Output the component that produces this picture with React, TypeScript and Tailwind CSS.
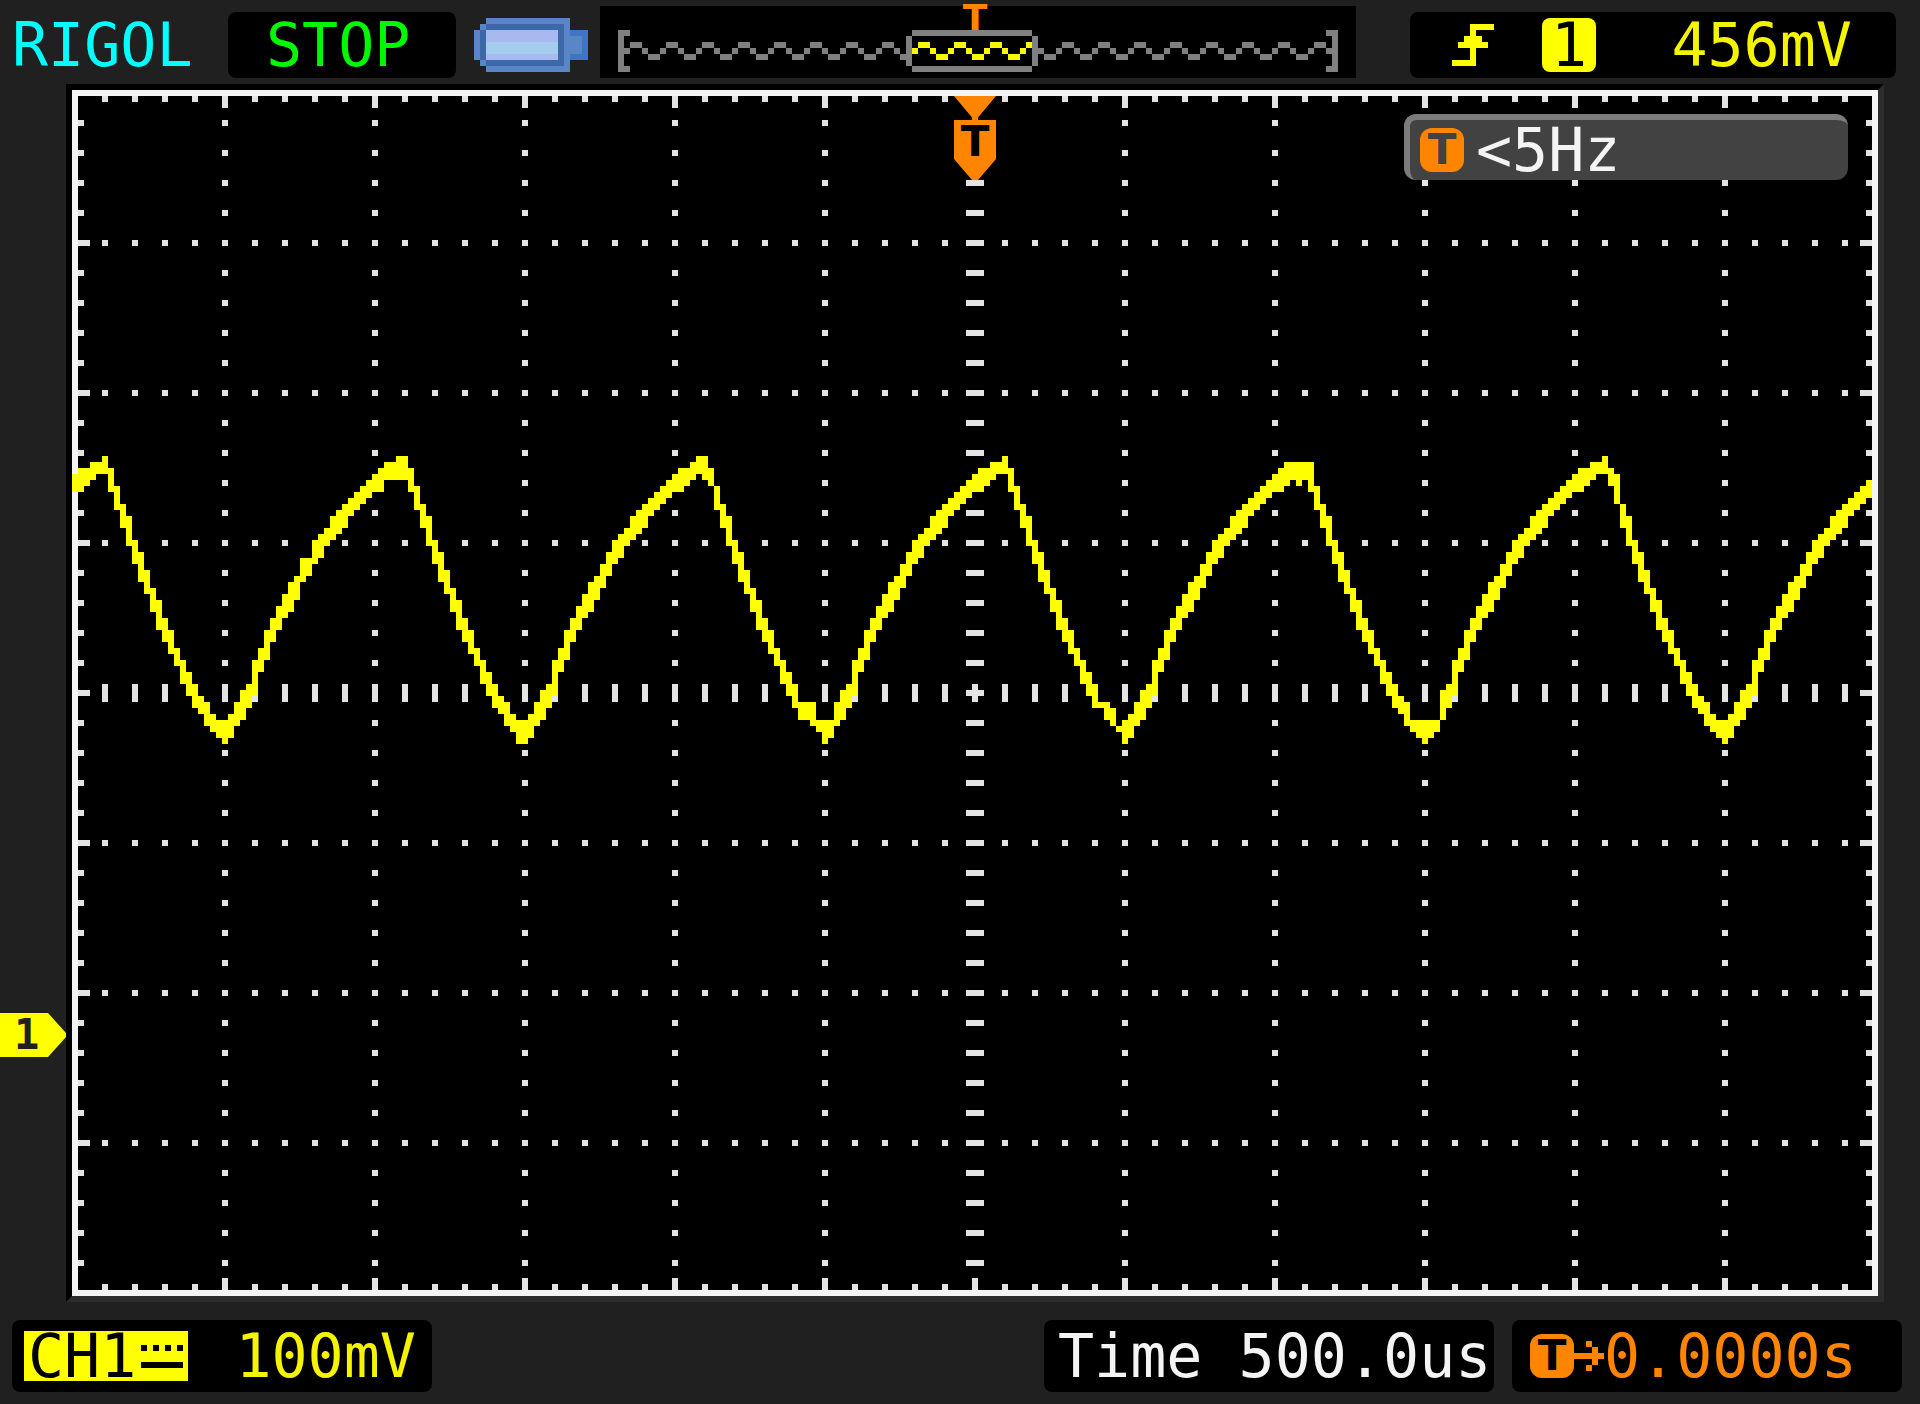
import React from "react";

const COLUMNS = 300;

// one period of the trace, starting at the peak: [column, top row, bottom row]
const PERIOD = 50;
const CYCLE: [number, number, number][] = [
  [0, 61, 64],
  [1, 63, 67],
  [2, 66, 70],
  [3, 69, 73],
  [4, 71, 76],
  [5, 75, 79],
  [6, 77, 82],
  [7, 80, 84],
  [8, 83, 87],
  [10, 88, 92],
  [12, 93, 96],
  [14, 97, 101],
  [16, 101, 104],
  [18, 104, 107],
  [19, 105, 108],
  [20, 105, 109],
  [21, 104, 108],
  [22, 102, 106],
  [24, 99, 103],
  [25, 95, 101],
  [26, 93, 97],
  [28, 88, 92],
  [30, 84, 88],
  [32, 81, 85],
  [34, 77, 81],
  [35, 75, 79],
  [37, 73, 76],
  [39, 70, 74],
  [41, 68, 71],
  [43, 66, 69],
  [45, 64, 67],
  [47, 63, 66],
  [49, 62, 64],
  [50, 61, 64],
];

// columns where the noise makes the trace wider than usual
const NOISE: Record<number, [number, number]> = {
  0: [64, 67],
  1: [63, 67],
  38: [78, 82],
  39: [78, 81],
  44: [70, 74],
  52: [62, 65],
  53: [62, 65],
  54: [61, 65],
  55: [61, 65],
  56: [63, 67],
  74: [105, 109],
  104: [61, 64],
  105: [61, 65],
  106: [63, 66],
  121: [102, 105],
  122: [102, 105],
  123: [102, 106],
  124: [105, 107],
  126: [105, 108],
  171: [102, 103],
  172: [102, 105],
  173: [103, 106],
  174: [106, 107],
  202: [62, 66],
  203: [62, 65],
  204: [62, 66],
  205: [62, 65],
  206: [62, 67],
  223: [105, 107],
  224: [105, 108],
  226: [105, 108],
  227: [105, 107],
  256: [63, 66],
  257: [64, 69],
};

function traceSpan(column: number): [number, number] {
  if (NOISE[column]) return NOISE[column];

  const phase = (column - 5 + PERIOD) % PERIOD;
  const next = CYCLE.findIndex((point) => point[0] > phase);
  const [x0, top0, bottom0] = CYCLE[next - 1];
  const [x1, top1, bottom1] = CYCLE[next];
  const t = (phase - x0) / (x1 - x0);

  return [
    Math.floor(top0 + (top1 - top0) * t),
    Math.ceil(bottom0 + (bottom1 - bottom0) * t),
  ];
}

const range = (from: number, to: number, step = 1) => {
  const values: number[] = [];
  for (let i = from; i <= to; i += step) values.push(i);
  return values;
};

const box = (x: number, y: number, w: number, h: number) =>
  `M${x} ${y}h${w}v${h}h${-w}z`;

function graticulePath() {
  const parts: string[] = [];

  // edge ticks
  range(5, 295, 5).forEach((x) => {
    const length = x % 25 === 0 ? 2 : 1;
    parts.push(box(x, 1, 1, length), box(x, 200 - length, 1, length));
  });
  range(5, 195, 5).forEach((y) => {
    const length = y % 25 === 0 ? 2 : 1;
    parts.push(box(1, y, length, 1), box(300 - length, y, length, 1));
  });

  // dotted divisions and the two centre axes
  range(25, 275, 25).forEach((x) => {
    range(5, 195, 5).forEach((y) => {
      parts.push(x === 150 ? box(x - 1, y, 3, 1) : box(x, y, 1, 1));
    });
  });
  range(25, 175, 25).forEach((y) => {
    range(5, 295, 5).forEach((x) => {
      if (x === 150 && y !== 100) return;
      parts.push(y === 100 ? box(x, y - 1, 1, 3) : box(x, y, 1, 1));
    });
  });

  return parts.join("");
}

const tracePath = range(0, COLUMNS - 1)
  .map((x) => {
    const [top, bottom] = traceSpan(x);
    return box(x, top, 1, bottom - top);
  })
  .join("");

function memoryWave(from: number, to: number) {
  const rows = [6, 7, 8, 8, 7, 6];
  return range(from, to)
    .map((x) => box(x, rows[x % 6], 1, 1))
    .join("");
}

function Battery() {
  return (
    <svg
      viewBox="0 0 19 9"
      className="mb-1.5 ml-[18px] block w-[114px] shrink-0"
      shapeRendering="crispEdges"
    >
      <path d="M2 0h14v9h-14v-1h-1v-1h-1v-5h1v-1h1z" fill="#5a86c8" />
      <path d="M2 1h13v7h-13v-1h-1v-5h1z" fill="#3c68a8" />
      <path d="M2 2h12v5h-12z" fill="#a8b8f0" />
      <path d="M2 4h12v2h-12z" fill="#a4ccec" />
      <path d="M16 2h3v5h-3z" fill="#4074c4" />
      <path d="M16 3h2v3h-2z" fill="#5a86c8" />
    </svg>
  );
}

function MemoryBar() {
  return (
    <div className="ml-3 min-w-0 flex-1 bg-black">
      <svg
        viewBox="0 0 126 12"
        className="block w-full overflow-visible"
        shapeRendering="crispEdges"
      >
        <path
          d="M3 4h2v1h-1v5h1v1h-2zM123 4h-2v1h1v5h-1v1h2z"
          fill="#808080"
        />
        <path d={memoryWave(4, 50) + memoryWave(73, 121)} fill="#808080" />
        <path
          d="M52 4h20v1h-20zM52 10h20v1h-20zM51 5h1v5h-1zM72 5h1v5h-1z"
          fill="#808080"
        />
        <path d={memoryWave(52, 71)} fill="#f8f800" />
        <text
          x="62.5"
          y="4"
          textAnchor="middle"
          fontSize="6"
          className="fill-[#ff8400] font-['DejaVu_Sans'] font-bold"
        >
          T
        </text>
      </svg>
    </div>
  );
}

function Plot() {
  return (
    <svg viewBox="0 0 301 201" className="block w-full bg-black">
      <g shapeRendering="crispEdges">
        <path d="M0 0h301v201h-301zM1 1v199h299v-199z" fill="#f4f4f4" />
        <path d={graticulePath()} fill="#e4e4e4" />
        <path d={tracePath} fill="#ffff00" />
      </g>
      {/* trigger position */}
      <path
        d="M147 1h7l-3 3.6v0.4h3v6.5l-3 3.5h-1l-3-3.5v-6.5h3v-0.4z"
        fill="#ff8400"
      />
      <text
        x="150.5"
        y="11"
        textAnchor="middle"
        fontSize="7"
        className="fill-black font-['DejaVu_Sans'] font-bold"
      >
        T
      </text>
    </svg>
  );
}

function TriggerBadge({ className }: { className: string }) {
  return (
    <span
      className={`flex h-[44px] w-[44px] shrink-0 items-center justify-center rounded-xl bg-[#ff8400] font-['DejaVu_Sans'] text-[42px] leading-none font-bold ${className}`}
    >
      T
    </span>
  );
}

export function App() {
  // height of the channel's zero level inside the plot
  const zeroLevel = 951 / 1218;

  return (
    <div className="min-h-screen bg-[#202020] font-['DejaVu_Sans_Mono',monospace] text-6xl leading-none whitespace-pre">
      <header className="flex h-[84px] items-end pr-6 pb-1.5 pl-3">
        <div className="flex h-[66px] w-[216px] shrink-0 items-center text-[#00ffff]">
          RIGOL
        </div>
        <div className="flex h-[66px] w-[228px] shrink-0 items-center rounded-lg bg-black pl-[38px] text-[#00f800]">
          STOP
        </div>
        <Battery />
        <MemoryBar />
        <div className="ml-[54px] flex h-[66px] w-[486px] shrink-0 items-center rounded-lg bg-black pr-11 pl-[42px] text-[#f4f400]">
          <svg
            viewBox="0 0 7 7"
            className="h-[42px] w-[42px]"
            shapeRendering="crispEdges"
          >
            <path
              d="M3 0h4v1h-3v1h1v1h1v1h-2v3h-4v-1h3v-2h-2v-1h1v-1h1z"
              fill="#ffff00"
            />
          </svg>
          <span className="ml-12 flex h-[54px] w-[54px] items-center justify-center rounded-lg bg-[#ffff00] text-black">
            1
          </span>
          <span className="ml-auto">456mV</span>
        </div>
      </header>

      <main className="relative pr-9 pl-[66px]">
        <div
          className="absolute left-0 flex h-[44px] w-[66px] -translate-y-1/2 items-center"
          style={{ top: `${zeroLevel * 100}%` }}
        >
          <svg viewBox="0 0 66 44" className="absolute inset-0">
            <path d="M0 0h48l18 20v4l-18 20h-48z" fill="#ffff00" />
          </svg>
          <span className="relative pl-3.5 text-[42px] font-bold text-[#202020]">
            1
          </span>
        </div>

        <div className="relative border-6 border-t-black border-r-[#2c2c2c] border-b-[#2c2c2c] border-l-black">
          <Plot />
          <div className="absolute top-6 right-[30px] flex h-[66px] w-[444px] items-center rounded-xl border-t-6 border-l-6 border-[#7c7c7c] bg-[#424242] pl-2.5 text-[#f4f4f4]">
            <TriggerBadge className="text-[#424242]" />
            <span className="ml-3">{"<5Hz"}</span>
          </div>
        </div>
      </main>

      <footer className="mt-[18px] flex pr-[18px] pb-3 pl-3">
        <div className="flex h-[72px] w-[420px] items-center rounded-lg bg-black pr-4 pl-3 text-[#f4f400]">
          <span className="flex h-[50px] w-[164px] items-center bg-[#ffff00] pl-1 text-black">
            CH1
            <svg
              viewBox="0 0 44 24"
              className="ml-1 h-6 w-11"
              shapeRendering="crispEdges"
            >
              <path
                d="M1 1h6v6h-6zM13 1h6v6h-6zM25 1h6v6h-6zM37 1h6v6h-6zM1 18h42v6h-42z"
                fill="#000000"
              />
            </svg>
          </span>
          <span className="ml-auto">100mV</span>
        </div>
        <div className="ml-auto flex h-[72px] w-[450px] items-center rounded-lg bg-black pl-3.5 text-[#f4f4f4]">
          Time 500.0us
        </div>
        <div className="ml-[18px] flex h-[72px] w-[390px] items-center rounded-lg bg-black pl-[18px] text-[#ff8400]">
          <TriggerBadge className="text-black" />
          <svg
            viewBox="0 0 5 5"
            className="h-[30px] w-[30px]"
            shapeRendering="crispEdges"
          >
            <path
              d="M2 0h1v1h-1zM3 1h1v3h-1zM2 4h1v1h-1zM0 2h5v1h-5z"
              fill="#ff8400"
            />
          </svg>
          <span>0.0000s</span>
        </div>
      </footer>
    </div>
  );
}

export default App;
